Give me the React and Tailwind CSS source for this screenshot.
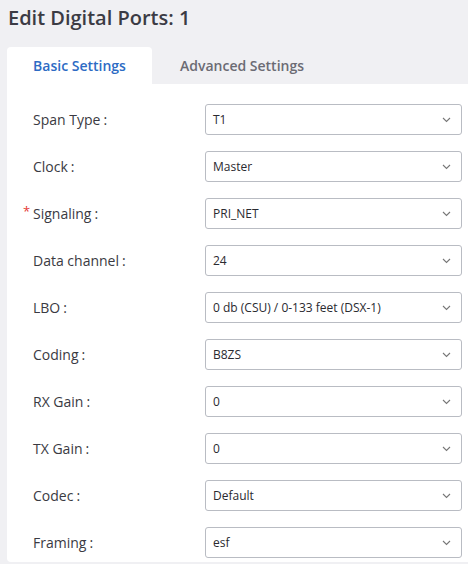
import React from 'react';

const fields = [
  { label: 'Span Type', value: 'T1' },
  { label: 'Clock', value: 'Master' },
  { label: 'Signaling', value: 'PRI_NET', required: true },
  { label: 'Data channel', value: '24' },
  { label: 'LBO', value: '0 db (CSU) / 0-133 feet (DSX-1)' },
  { label: 'Coding', value: 'B8ZS' },
  { label: 'RX Gain', value: '0' },
  { label: 'TX Gain', value: '0' },
  { label: 'Codec', value: 'Default' },
  { label: 'Framing', value: 'esf' },
];

const Chevron = () => (
  <svg width="9" height="6" viewBox="0 0 9 6" fill="none" className="text-[#777]">
    <path d="M1 1l3.5 3.5L8 1" stroke="currentColor" strokeWidth="1.1" />
  </svg>
);

const App = () => {
  return (
    <div className="w-[468px] h-[564px] overflow-hidden bg-[#f0f0f3] font-['Open_Sans',sans-serif]">
      <h1 className="px-2 pt-[4px] h-[47px] text-[20px] leading-[28px] font-semibold text-[#3b3b44]">
        Edit Digital Ports: 1
      </h1>

      <div className="flex pl-[7px] h-[37px]">
        <div className="w-[145px] bg-white rounded-t-[4px] flex items-center justify-center text-[14px] font-semibold text-[#2d6bc4]">
          Basic Settings
        </div>
        <div className="w-[180px] flex items-center justify-center text-[14px] font-semibold text-[#6b6b73]">
          Advanced Settings
        </div>
      </div>

      <div className="ml-[7px] bg-white rounded-bl-[4px] pt-[20px] pb-[4px] pl-[26px] pr-[6px] flex flex-col gap-[16px]">
        {fields.map((f) => (
          <div key={f.label} className="flex items-center h-[31px]">
            <div className="relative w-[172px] text-[14px] text-[#3a3a42]">
              {f.required && (
                <span className="absolute left-[-10px] top-[-1px] text-[#e53935] text-[13px]">*</span>
              )}
              {f.label}
              <span className="ml-[3px]">:</span>
            </div>
            <div className="flex-1 h-[31px] border border-[#b9bcc3] rounded-[3px] flex items-center justify-between pl-[7px] pr-[10px] text-[12px] text-[#2a2a30]">
              <span>{f.value}</span>
              <Chevron />
            </div>
          </div>
        ))}
      </div>
    </div>
  );
};

export default App;
